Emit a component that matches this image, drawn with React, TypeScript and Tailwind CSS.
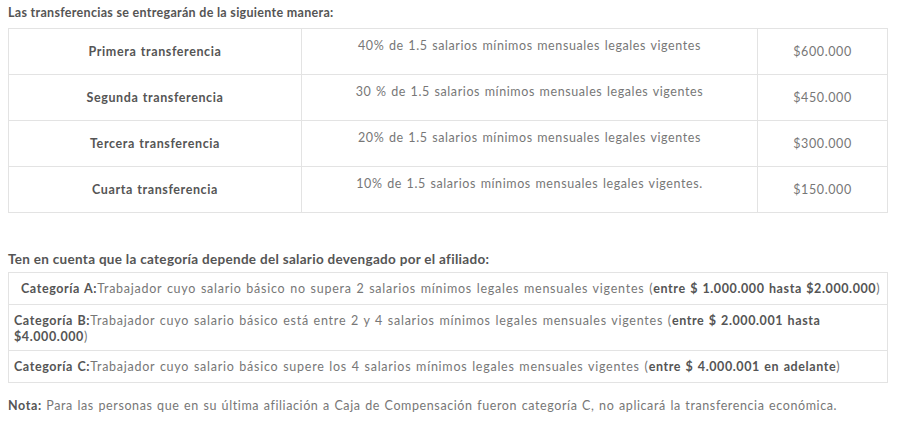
const transferencias = [
  { nombre: 'Primera transferencia', detalle: '40% de 1.5 salarios mínimos mensuales legales vigentes', valor: '$600.000' },
  { nombre: 'Segunda transferencia', detalle: '30 % de 1.5 salarios mínimos mensuales legales vigentes', valor: '$450.000' },
  { nombre: 'Tercera transferencia', detalle: '20% de 1.5 salarios mínimos mensuales legales vigentes', valor: '$300.000' },
  { nombre: 'Cuarta transferencia', detalle: '10% de 1.5 salarios mínimos mensuales legales vigentes.', valor: '$150.000' },
];

const App = () => {
  return (
    <div className="bg-white w-[900px] h-[421px] px-2 pt-[5px] text-[#777] text-[12.5px] tracking-[0.6px] [word-spacing:0.8px]" style={{ fontFamily: 'Lato, "Noto Sans", sans-serif' }}>
      <p className="font-bold text-[#555] leading-4 mb-[7px] tracking-[0.3px] [word-spacing:0px]">Las transferencias se entregarán de la siguiente manera:</p>
      <table className="w-[880px] border-collapse border border-[#e3e3e3]">
        <tbody>
          {transferencias.map((t) => (
            <tr key={t.nombre} className="h-[46px]">
              <td className="w-[293px] border border-[#e3e3e3] text-center align-middle font-bold text-[#555] pt-[2px]">{t.nombre}</td>
              <td className="w-[456px] border border-[#e3e3e3] text-center align-top pt-[8px]">{t.detalle}</td>
              <td className="border border-[#e3e3e3] text-center align-middle pt-[2px]">{t.valor}</td>
            </tr>
          ))}
        </tbody>
      </table>

      <p className="font-bold text-[#555] text-[13.5px] tracking-[0.3px] [word-spacing:0px] leading-4 mt-[38px] mb-[5px]">Ten en cuenta que la categoría depende del salario devengado por el afiliado:</p>
      <table className="w-[880px] border-collapse border border-[#e3e3e3] tracking-[0.75px]">
        <tbody>
          <tr className="h-[32px]">
            <td className="border border-[#e3e3e3] pl-3 pr-1 leading-4">
              <b className="text-[#555] tracking-[0.6px]">Categoría A:</b>Trabajador cuyo salario básico no supera 2 salarios mínimos legales mensuales vigentes (<b className="text-[#555] tracking-[0.6px]">entre $ 1.000.000 hasta $2.000.000</b>)
            </td>
          </tr>
          <tr className="h-[46px]">
            <td className="border border-[#e3e3e3] pl-[5px] pr-[40px] align-top pt-[8px] leading-4">
              <b className="text-[#555] tracking-[0.6px]">Categoría B:</b>Trabajador cuyo salario básico está entre 2 y 4 salarios mínimos legales mensuales vigentes (<b className="text-[#555] tracking-[0.6px]">entre $ 2.000.001 hasta $4.000.000</b>)
            </td>
          </tr>
          <tr className="h-[32px]">
            <td className="border border-[#e3e3e3] px-[5px] leading-4">
              <b className="text-[#555] tracking-[0.6px]">Categoría C:</b>Trabajador cuyo salario básico supere los 4 salarios mínimos legales mensuales vigentes (<b className="text-[#555] tracking-[0.6px]">entre $ 4.000.001 en adelante</b>)
            </td>
          </tr>
        </tbody>
      </table>

      <p className="leading-4 mt-[15px]">
        <b className="text-[#555]">Nota:</b> Para las personas que en su última afiliación a Caja de Compensación fueron categoría C, no aplicará la transferencia económica.
      </p>
    </div>
  );
};

export default App;
